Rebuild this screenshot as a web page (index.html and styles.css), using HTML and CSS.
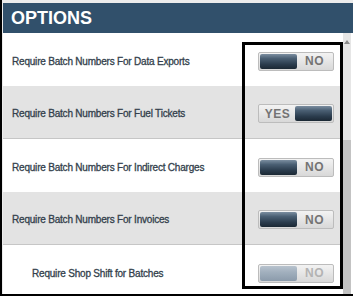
FILE: index.html
```html
<!DOCTYPE html>
<html>
<head>
  <title>Options</title>
  <link rel="stylesheet" href="styles.css">
</head>
<body>
  <div class="frame">
    <div class="panel">
      <h2 class="panel-title">OPTIONS</h2>
      <div class="panel-body">
        <div class="option-list">
          <div class="option-row">
            <span class="option-label">Require Batch Numbers For Data Exports</span>
            <div class="toggle">
              <span class="knob"></span>
              <span class="toggle-text">NO</span>
            </div>
          </div>
          <div class="option-row alt">
            <span class="option-label">Require Batch Numbers For Fuel Tickets</span>
            <div class="toggle on">
              <span class="knob"></span>
              <span class="toggle-text">YES</span>
            </div>
          </div>
          <div class="option-row">
            <span class="option-label">Require Batch Numbers For Indirect Charges</span>
            <div class="toggle">
              <span class="knob"></span>
              <span class="toggle-text">NO</span>
            </div>
          </div>
          <div class="option-row alt">
            <span class="option-label">Require Batch Numbers For Invoices</span>
            <div class="toggle">
              <span class="knob"></span>
              <span class="toggle-text">NO</span>
            </div>
          </div>
          <div class="option-row sub">
            <span class="option-label">Require Shop Shift for Batches</span>
            <div class="toggle disabled">
              <span class="knob"></span>
              <span class="toggle-text">NO</span>
            </div>
          </div>
        </div>
        <div class="scrollbar">
          <span class="scroll-arrow"></span>
          <div class="scroll-thumb"></div>
        </div>
      </div>
    </div>
    <div class="highlight"></div>
  </div>
</body>
</html>
```

FILE: styles.css
```css
body {
  margin: 0;
  background-color: #fff;
  font-family: "Liberation Sans", Arial, sans-serif;
  overflow: hidden;
}

.frame {
  position: relative;
  height: 296px;
  box-sizing: border-box;
  padding-top: 3px;
  padding-left: 1px;
  border-left: 2px solid #000;
  border-bottom: 2px solid #000;
  background-color: #ececec;
  overflow: hidden;
}

.panel {
  background-color: #fff;
}

.panel-title {
  margin: 0;
  height: 30px;
  line-height: 30px;
  padding-left: 8px;
  background-color: #31506b;
  color: #fff;
  font-size: 18px;
  font-weight: bold;
}

.panel-body {
  display: flex;
}

.option-list {
  flex: 1;
}

.option-row {
  display: flex;
  align-items: center;
  justify-content: space-between;
  height: 53px;
  box-sizing: border-box;
  padding: 3px 9px 0 9px;
}

.option-row.alt {
  background-color: #e3e3e3;
  border-bottom: 1px solid #c6c6c6;
}

.option-row.sub {
  padding-left: 29px;
}

.option-label {
  font-size: 10px;
  letter-spacing: -0.2px;
  color: #333f4c;
  -webkit-text-stroke: 0.3px #333f4c;
}

.toggle {
  display: flex;
  align-items: center;
  width: 76px;
  height: 19px;
  box-sizing: border-box;
  padding: 1px;
  border: 1px solid #bcbcbc;
  border-radius: 2px;
  background: linear-gradient(#f3f3f3, #d8d8d8);
}

.toggle.on {
  flex-direction: row-reverse;
}

.knob {
  width: 37px;
  height: 100%;
  border-radius: 2px;
  background: linear-gradient(#7b8ea0 0%, #4a5f73 30%, #2a3b4c 70%, #1b2834 100%);
}

.toggle-text {
  flex: 1;
  text-align: center;
  font-size: 12px;
  font-weight: bold;
  letter-spacing: 0.5px;
  color: #747474;
}

.toggle.disabled .knob {
  background: linear-gradient(#b8c3ce 0%, #a2b0be 40%, #8b9bab 100%);
}

.toggle.disabled .toggle-text {
  color: #b3b3b3;
}

.scrollbar {
  width: 8px;
  margin-right: 2px;
  display: flex;
  flex-direction: column;
  align-items: center;
  background-color: #e6e6e6;
}

.scroll-arrow {
  margin-top: 7px;
  width: 0;
  height: 0;
  border-left: 3px solid transparent;
  border-right: 3px solid transparent;
  border-bottom: 4px solid #8a8a8a;
}

.scroll-thumb {
  align-self: stretch;
  flex: 1;
  margin-top: 96px;
  background-color: #c3c3c3;
}

.highlight {
  position: absolute;
  left: 240px;
  top: 42px;
  width: 101px;
  height: 247px;
  box-sizing: border-box;
  border: 3px solid #000;
}
```
